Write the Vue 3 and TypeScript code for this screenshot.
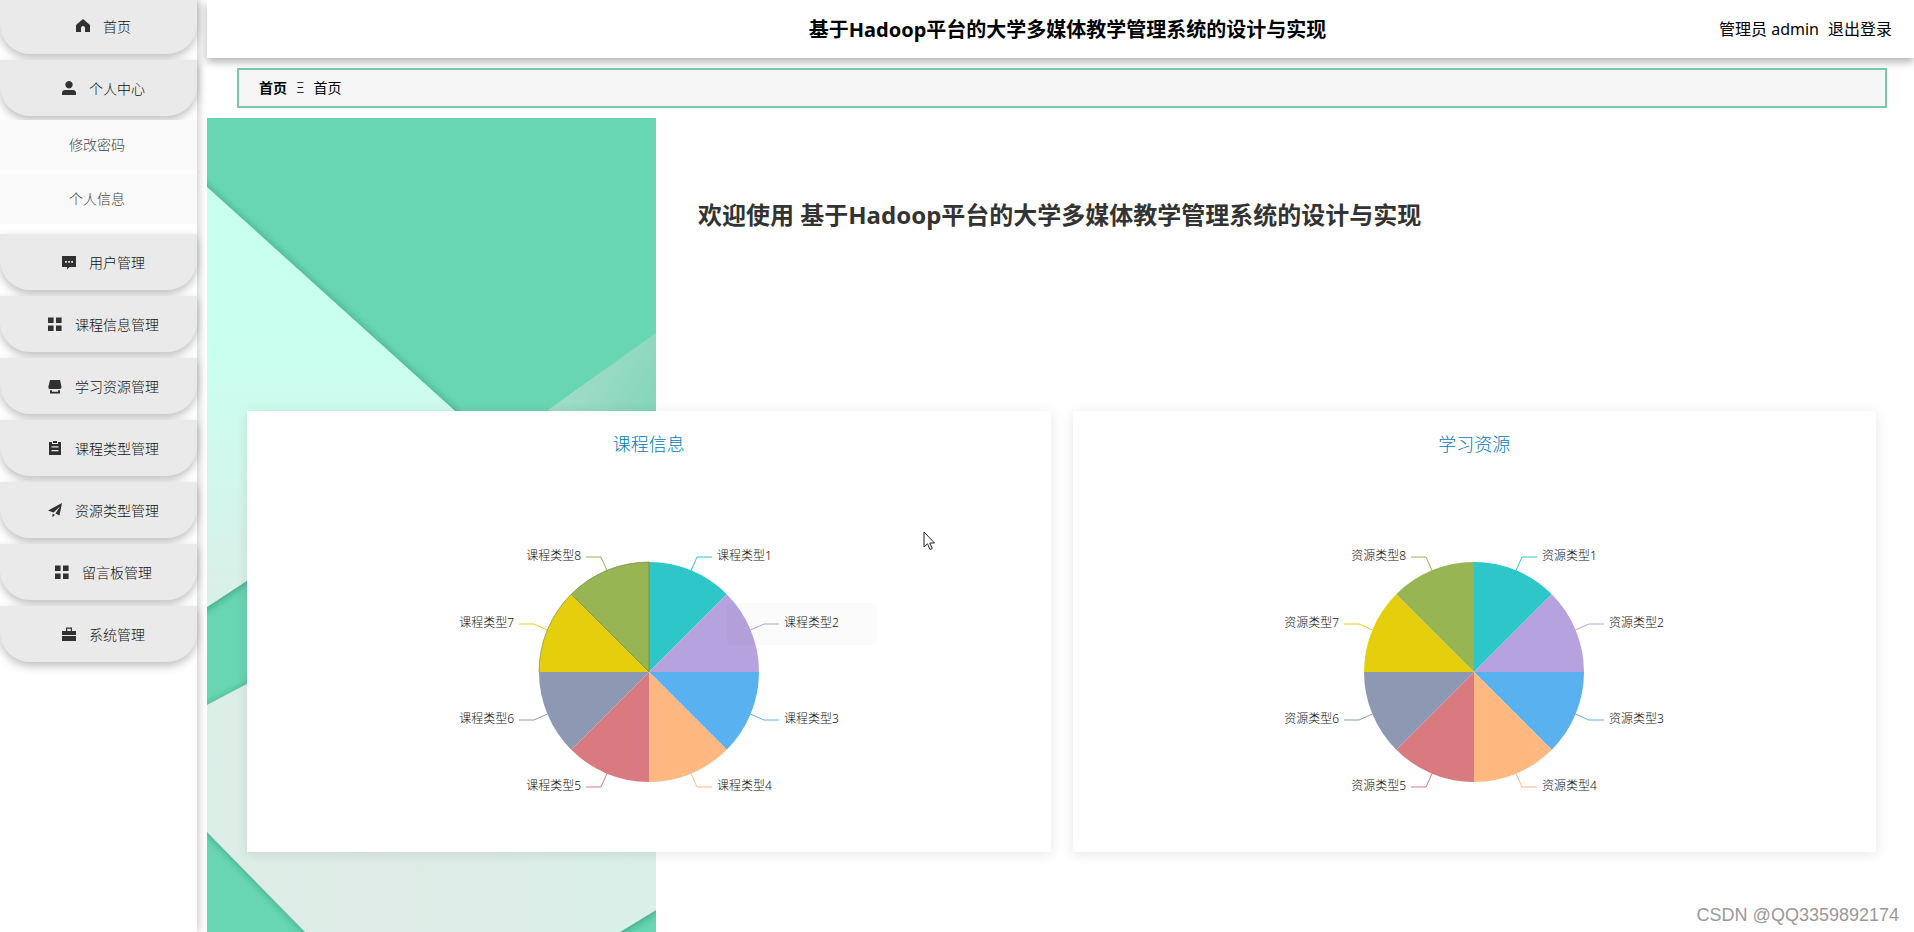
<script setup lang="ts">
interface MenuItem {
  label: string
  icon: string
  children?: string[]
}

interface Chart {
  title: string
  prefix: string
  outlined: boolean
}

const systemName = '基于Hadoop平台的大学多媒体教学管理系统的设计与实现'

const icons: Record<string, string> = {
  home: 'M7 0 L14 6 V13 H9 V9 Q9 7 7 7 Q5 7 5 9 V13 H0 V6 Z',
  user: 'M7 0 A3.7 3.7 0 1 1 6.99 0 Z M0 14 V12 Q0 9 3.5 9 H10.500 Q14 9 14 12 V14 Z',
  chat: 'M0 1 H14 V12 H7.500 L5 14.500 V12 H0 Z M3 6 V7.800 H4.800 V6 Z M6.100 6 V7.800 H7.900 V6 Z M9.200 6 V7.800 H11 V6 Z',
  grid: 'M0 0.500 H5.600 V6.100 H0 Z M8 0.500 H13.600 V6.100 H8 Z M0 8.500 H5.600 V14.100 H0 Z M8 8.500 H13.600 V14.100 H8 Z',
  shop: 'M2 1 H12 L13.500 8 Q13.500 10 11.600 10 H2 Q0 10 0.300 8 Z M2 11.200 H4 V12.800 H10 V11.200 H12 V14.500 H2 Z',
  order: 'M1 1 H4 V3 H10 V1 H13 V14 H1 Z M5 0 H9 V2 H5 Z M3.500 5.300 V6.600 H10.500 V5.300 Z M3.500 9 V10.300 H10.500 V9 Z',
  plane: 'M14 0 L11.500 12.500 L7.500 10.500 L12 3.500 L5.500 9.500 L0 7.500 Z M4.500 10.700 L7 11.700 L4.500 14.300 Z',
  bag: 'M4 0.500 H10 V4 H14 V8 H0 V4 H4 Z M5.200 1.700 V4 H8.800 V1.700 Z M0 9 H14 V14 H0 Z',
}

const menu: MenuItem[] = [
  { label: '首页', icon: 'home' },
  { label: '个人中心', icon: 'user', children: ['修改密码', '个人信息'] },
  { label: '用户管理', icon: 'chat' },
  { label: '课程信息管理', icon: 'grid' },
  { label: '学习资源管理', icon: 'shop' },
  { label: '课程类型管理', icon: 'order' },
  { label: '资源类型管理', icon: 'plane' },
  { label: '留言板管理', icon: 'grid' },
  { label: '系统管理', icon: 'bag' },
]

const charts: Chart[] = [
  { title: '课程信息', prefix: '课程类型', outlined: true },
  { title: '学习资源', prefix: '资源类型', outlined: false },
]

const colors = ['#2ec7c9', '#b6a2de', '#5ab1ef', '#ffb980', '#d87a80', '#8d98b3', '#e5cf0d', '#97b552']
const radius = 110

const slices = colors.map((color, i) => {
  const start = (i * Math.PI) / 4
  const end = start + Math.PI / 4
  const mid = start + Math.PI / 8
  const at = (a: number, r: number) => [Math.sin(a) * r, -Math.cos(a) * r].map(n => n.toFixed(2)).join(' ')
  const side = Math.sin(mid) > 0 ? 1 : -1
  const bendX = Math.round(Math.sin(mid) * 125)
  const bendY = Math.round(-Math.cos(mid) * 125)
  return {
    color,
    path: `M0 0 L${at(start, radius)} A${radius} ${radius} 0 0 1 ${at(end, radius)} Z`,
    line: `M${at(mid, radius)} L${bendX} ${bendY} H${bendX + side * 15}`,
    x: bendX + side * 20,
    y: bendY + 3,
    anchor: side > 0 ? 'start' : 'end',
  }
})
</script>

<template>
  <div class="layout">
    <aside class="sidebar">
      <nav class="menu">
        <template v-for="item in menu" :key="item.label">
          <a href="#" class="menu-item">
            <svg class="menu-icon" viewBox="0 0 14 15" aria-hidden="true">
              <path :d="icons[item.icon]" fill-rule="evenodd" />
            </svg>
            <span class="menu-label">{{ item.label }}</span>
          </a>
          <div v-if="item.children" class="submenu">
            <a v-for="child in item.children" :key="child" href="#" class="submenu-item">{{ child }}</a>
          </div>
        </template>
      </nav>
    </aside>

    <div class="page">
      <header class="header">
        <h1 class="header-title">{{ systemName }}</h1>
        <div class="account">
          <span>管理员 admin</span>
          <button type="button" class="logout">退出登录</button>
        </div>
      </header>

      <div class="breadcrumb">
        <a href="#" class="crumb-root">首页</a>
        <span class="crumb-separator">Ξ</span>
        <span>首页</span>
      </div>

      <main class="content">
        <svg class="backdrop" viewBox="0 0 449 814" preserveAspectRatio="xMinYMin slice" aria-hidden="true">
          <defs>
            <linearGradient id="mint" x1="0" y1="0" x2="0" y2="1">
              <stop offset="0.4" stop-color="#c9ffef" />
              <stop offset="1" stop-color="#dbeee8" />
            </linearGradient>
            <linearGradient id="pale" x1="0" y1="0" x2="1" y2="0">
              <stop offset="0" stop-color="#dbefe7" />
              <stop offset="0.4" stop-color="#dfebe6" />
              <stop offset="1" stop-color="#d9f0e8" />
            </linearGradient>
            <linearGradient id="fold" x1="0" y1="0" x2="1" y2="1">
              <stop offset="0.2" stop-color="#a2ddc9" />
              <stop offset="0.8" stop-color="#7dd4b6" />
            </linearGradient>
            <filter id="shade" x="-20%" y="-20%" width="140%" height="140%">
              <feDropShadow dx="1" dy="1" stdDeviation="4" flood-color="#24765a" flood-opacity="0.6" />
            </filter>
          </defs>
          <rect width="449" height="814" fill="#69d6b3" />
          <path d="M341 292 L449 215 V400 H341 Z" fill="url(#fold)" />
          <path d="M-30 42 L0 69 L247 292 L270 312 L0 489 L-30 509 Z" fill="url(#mint)" filter="url(#shade)" />
          <path d="M-30 603 L0 587 L449 349 V792 L413 814 L380 844 H128 L98 814 L0 714 L-30 684 Z" fill="url(#pale)" filter="url(#shade)" />
        </svg>

        <h2 class="welcome">欢迎使用 {{ systemName }}</h2>

        <div class="cards">
          <section v-for="chart in charts" :key="chart.title" class="card">
            <h3 class="card-title">{{ chart.title }}</h3>
            <svg class="pie" viewBox="-240 -140 480 280" role="img" :aria-label="chart.title">
              <g v-for="(slice, i) in slices" :key="slice.color">
                <path :d="slice.path" :fill="slice.color" />
                <path :d="slice.line" :stroke="slice.color" fill="none" />
                <text :x="slice.x" :y="slice.y" :text-anchor="slice.anchor">{{ chart.prefix }}{{ i + 1 }}</text>
              </g>
              <path v-if="chart.outlined" class="outline" d="M-110 0 A110 110 0 0 1 0 -110 V0 L-78 -78" />
            </svg>
            <div v-if="chart.outlined" class="tooltip-ghost"></div>
          </section>
        </div>
      </main>
    </div>

    <svg class="pointer" viewBox="0 0 13 20" aria-hidden="true">
      <path d="M1 1 V16 L4.500 12.800 L7 18.500 L9.200 17.500 L6.800 12 H11.500 Z" />
    </svg>
    <div class="watermark">CSDN @QQ3359892174</div>
  </div>
</template>

<style>
body {
  margin: 0;
  background: #fff;
}
</style>

<style scoped>
.layout {
  position: relative;
  display: flex;
  gap: 10px;
  min-height: 100vh;
  overflow: hidden;
  font-family: "Noto Sans", "Noto Sans CJK SC", sans-serif;
  font-size: 14px;
  font-weight: 300;
  color: #111;
}

a {
  color: inherit;
  text-decoration: none;
}

.sidebar {
  flex: 0 0 197px;
  box-shadow: 2px 0 8px rgba(0, 0, 0, 0.2);
}

.menu {
  display: flex;
  flex-direction: column;
  gap: 6px;
  margin-top: -2px;
}

.menu-item {
  position: relative;
  display: flex;
  align-items: center;
  justify-content: center;
  gap: 13px;
  height: 56px;
  padding-left: 10px;
  box-sizing: border-box;
  background: #eaeaea;
  border-radius: 0 0 30px 30px;
  box-shadow: 0 4px 8px rgba(0, 0, 0, 0.25);
}

.menu-label {
  padding-bottom: 1px;
}

.menu-icon {
  width: 14px;
  height: 15px;
  fill: #303133;
}

.submenu {
  position: relative;
  display: flex;
  flex-direction: column;
  gap: 4px;
  margin-top: -2px;
  padding-bottom: 4px;
  background: #fff;
}

.submenu-item {
  display: flex;
  align-items: center;
  justify-content: center;
  height: 48px;
  padding: 0 3px 2px 0;
  background: #f9f9f9;
  color: #444;
}

.page {
  flex: 1;
  min-width: 0;
  display: flex;
  flex-direction: column;
}

.header {
  display: grid;
  grid-template-columns: 1fr auto 1fr;
  align-items: center;
  height: 56px;
  padding: 0 22px 2px 0;
  background: #fff;
  box-shadow: 0 4px 8px rgba(0, 0, 0, 0.3);
  color: #000;
}

.header-title {
  grid-column: 2;
  margin: 0 0 0 36px;
  font-size: 20px;
  font-weight: 700;
}

.account {
  display: flex;
  justify-content: flex-end;
  gap: 9px;
  font-size: 16px;
  font-weight: 400;
}

.logout {
  padding: 0;
  border: 0;
  background: none;
  font: inherit;
  color: inherit;
  cursor: pointer;
}

.breadcrumb {
  position: relative;
  display: flex;
  align-items: center;
  gap: 9px;
  height: 34px;
  margin: 10px 27px 10px 30px;
  padding: 0 20px 2px;
  border: 2px solid #75caae;
  background: #f6f6f6;
  color: #000;
  font-weight: 400;
}

.crumb-root {
  font-weight: 700;
}

.crumb-separator {
  font-weight: 300;
}

.content {
  position: relative;
  flex: 1;
  padding-bottom: 80px;
}

.backdrop {
  position: absolute;
  left: 0;
  top: 0;
  width: 449px;
  height: 100%;
}

.welcome {
  position: relative;
  margin: 79px 0 0 491px;
  height: 214px;
  font-size: 24px;
  line-height: 36px;
  font-weight: 700;
  color: #333;
}

.cards {
  position: relative;
  display: grid;
  grid-template-columns: 1fr 1fr;
  gap: 22px;
  margin: 0 38px 0 40px;
}

.card {
  position: relative;
  display: flex;
  flex-direction: column;
  align-items: center;
  height: 441px;
  background: #fff;
  box-shadow: 0 2px 12px rgba(0, 0, 0, 0.1);
}

.card-title {
  margin: 20px 0 75px;
  font-size: 18px;
  line-height: 26px;
  font-weight: 300;
  color: #007ab8;
}

.pie {
  width: 480px;
  height: 280px;
}

.pie text {
  font-size: 12px;
  fill: #111;
}

.outline {
  fill: none;
  stroke: #6b7d35;
  stroke-opacity: 0.6;
}

.tooltip-ghost {
  position: absolute;
  left: 480px;
  top: 192px;
  width: 150px;
  height: 42px;
  border-radius: 4px;
  background: rgba(50, 50, 50, 0.02);
}

.pointer {
  position: absolute;
  left: 923px;
  top: 531px;
  width: 13px;
  height: 20px;
  fill: #fff;
  stroke: #222;
}

.watermark {
  position: absolute;
  right: 15px;
  bottom: 5px;
  font-family: "Liberation Sans", sans-serif;
  font-size: 18px;
  line-height: 24px;
  color: #999;
}
</style>
